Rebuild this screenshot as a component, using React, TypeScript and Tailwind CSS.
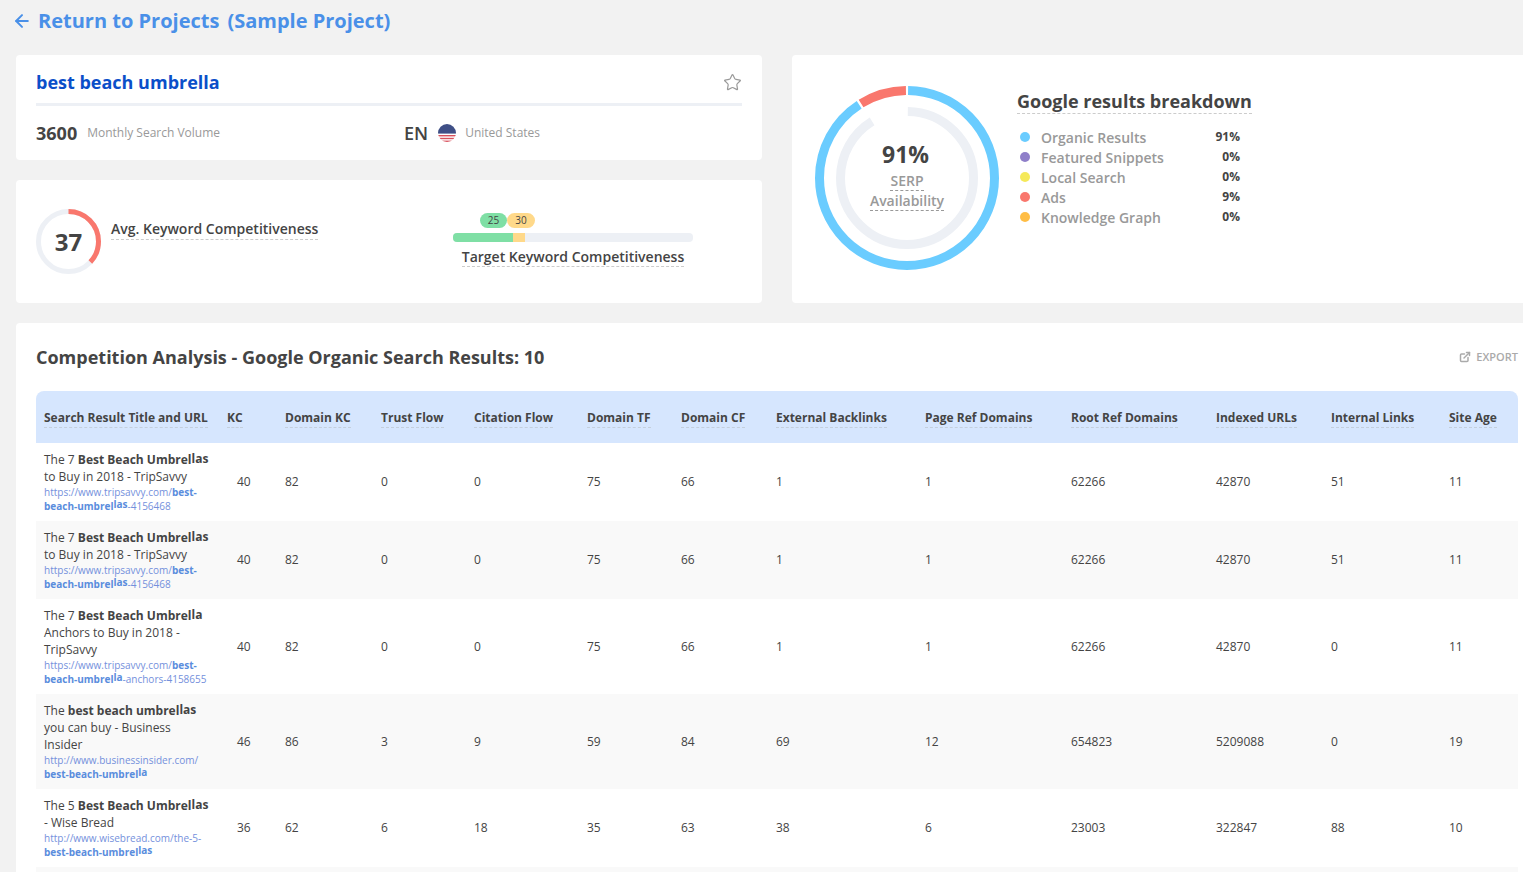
import type { ReactNode } from "react"

import { ArrowLeft, ExternalLink, Star } from "lucide-react"

const columns = [
	{ label: "Search Result Title and URL", width: "w-[183px]" },
	{ label: "KC", width: "w-[58px]" },
	{ label: "Domain KC", width: "w-[96px]" },
	{ label: "Trust Flow", width: "w-[93px]" },
	{ label: "Citation Flow", width: "w-[113px]" },
	{ label: "Domain TF", width: "w-[94px]" },
	{ label: "Domain CF", width: "w-[95px]" },
	{ label: "External Backlinks", width: "w-[149px]" },
	{ label: "Page Ref Domains", width: "w-[146px]" },
	{ label: "Root Ref Domains", width: "w-[145px]" },
	{ label: "Indexed URLs", width: "w-[115px]" },
	{ label: "Internal Links", width: "w-[118px]" },
	{ label: "Site Age", width: "w-[77px]" },
]

const legend = [
	{ label: "Organic Results", value: "91%", color: "bg-[#6accff]" },
	{ label: "Featured Snippets", value: "0%", color: "bg-[#8f7fc9]" },
	{ label: "Local Search", value: "0%", color: "bg-[#f5e95a]" },
	{ label: "Ads", value: "9%", color: "bg-[#f9776d]" },
	{ label: "Knowledge Graph", value: "0%", color: "bg-[#ffbd45]" },
]

function Strong({ children, tail }: { children: ReactNode; tail: string }) {
	return (
		<b className="font-bold text-[#444]">
			{children}
			<span className="align-[1px] leading-[0]">{tail}</span>
		</b>
	)
}

function UrlStrong({ children, tail }: { children: ReactNode; tail?: string }) {
	return (
		<b className="font-bold text-[#5a8ddd]">
			{children}
			{tail && <span className="align-[2px] leading-[0]">{tail}</span>}
		</b>
	)
}

const rows: { title: ReactNode; url: ReactNode; values: string[] }[] = [
	{
		title: (
			<>
				The 7 <Strong tail="las">Best Beach Umbrel</Strong> to Buy in 2018 - TripSavvy
			</>
		),
		url: (
			<>
				https://www.tripsavvy.com/<UrlStrong>best-</UrlStrong>
				<br />
				<UrlStrong tail="las">beach-umbrel</UrlStrong>-4156468
			</>
		),
		values: ["40", "82", "0", "0", "75", "66", "1", "1", "62266", "42870", "51", "11"],
	},
	{
		title: (
			<>
				The 7 <Strong tail="las">Best Beach Umbrel</Strong> to Buy in 2018 - TripSavvy
			</>
		),
		url: (
			<>
				https://www.tripsavvy.com/<UrlStrong>best-</UrlStrong>
				<br />
				<UrlStrong tail="las">beach-umbrel</UrlStrong>-4156468
			</>
		),
		values: ["40", "82", "0", "0", "75", "66", "1", "1", "62266", "42870", "51", "11"],
	},
	{
		title: (
			<>
				The 7 <Strong tail="la">Best Beach Umbrel</Strong> Anchors to Buy in 2018 - TripSavvy
			</>
		),
		url: (
			<>
				https://www.tripsavvy.com/<UrlStrong>best-</UrlStrong>
				<br />
				<UrlStrong tail="la">beach-umbrel</UrlStrong>-anchors-4158655
			</>
		),
		values: ["40", "82", "0", "0", "75", "66", "1", "1", "62266", "42870", "0", "11"],
	},
	{
		title: (
			<>
				The <Strong tail="las">best beach umbrel</Strong> you can buy - Business Insider
			</>
		),
		url: (
			<>
				http://www.businessinsider.com/
				<br />
				<UrlStrong tail="la">best-beach-umbrel</UrlStrong>
			</>
		),
		values: ["46", "86", "3", "9", "59", "84", "69", "12", "654823", "5209088", "0", "19"],
	},
	{
		title: (
			<>
				The 5 <Strong tail="las">Best Beach Umbrel</Strong> - Wise Bread
			</>
		),
		url: (
			<>
				http://www.wisebread.com/the-5-
				<br />
				<UrlStrong tail="las">best-beach-umbrel</UrlStrong>
			</>
		),
		values: ["36", "62", "6", "18", "35", "63", "38", "6", "23003", "322847", "88", "10"],
	},
]

function UsFlag() {
	return (
		<svg width="18" height="18" viewBox="0 0 18 18">
			<defs>
				<clipPath id="flag-clip">
					<circle cx="9" cy="9" r="9" />
				</clipPath>
			</defs>
			<g clipPath="url(#flag-clip)">
				<rect width="18" height="18" fill="#fff" />
				<rect y="11" width="18" height="1.4" fill="#d8505c" />
				<rect y="13.8" width="18" height="1.4" fill="#d8505c" />
				<rect y="16.6" width="18" height="1.4" fill="#d8505c" />
				<rect width="18" height="9.6" fill="#3f4f86" />
			</g>
		</svg>
	)
}

function ScoreRing() {
	return (
		<div className="relative h-[65px] w-[65px] shrink-0">
			<svg width="65" height="65" viewBox="0 0 65 65" className="-rotate-90">
				<circle cx="32.5" cy="32.5" r="30" fill="none" stroke="#edf0f5" strokeWidth="5" />
				<circle
					cx="32.5"
					cy="32.5"
					r="30"
					fill="none"
					stroke="#f9776d"
					strokeWidth="5"
					pathLength={100}
					strokeDasharray="37 63"
				/>
			</svg>
			<span className="absolute inset-0 flex items-center justify-center text-[24px] font-bold text-[#444]">
				37
			</span>
		</div>
	)
}

function SerpDonut() {
	return (
		<div className="relative h-[184px] w-[184px] shrink-0">
			<svg width="184" height="184" viewBox="0 0 184 184" className="-rotate-90">
				<circle
					cx="92"
					cy="92"
					r="66.5"
					fill="none"
					stroke="#edf0f5"
					strokeWidth="9"
					pathLength={100}
					strokeDasharray="91 9"
					strokeDashoffset="-0.2"
				/>
				<circle
					cx="92"
					cy="92"
					r="87.5"
					fill="none"
					stroke="#6accff"
					strokeWidth="9"
					pathLength={100}
					strokeDasharray="90.6 9.4"
					strokeDashoffset="-0.2"
				/>
				<circle
					cx="92"
					cy="92"
					r="87.5"
					fill="none"
					stroke="#f9776d"
					strokeWidth="9"
					pathLength={100}
					strokeDasharray="8.6 91.4"
					strokeDashoffset="-91.2"
				/>
			</svg>
			<div className="absolute inset-0 flex flex-col items-center justify-center pb-[8px]">
				<span className="mr-[3px] text-[23px] leading-[32px] font-bold text-[#444]">91%</span>
				<span className="mt-[1px] border-b border-dashed border-[#999] text-[14px] leading-[19px] font-semibold text-[#999]">
					SERP
				</span>
				<span className="border-b border-dashed border-[#999] text-[14px] leading-[19px] font-semibold text-[#999]">
					Availability
				</span>
			</div>
		</div>
	)
}

export default function App() {
	return (
		<div className="h-[872px] w-[1523px] overflow-hidden bg-[#f2f2f2] font-['Open_Sans',sans-serif] text-[#444]">
			<a className="flex h-[55px] items-start pt-[9px] pl-[12px] text-[20px] leading-[24px] font-bold text-[#4a90e8]">
				<ArrowLeft size={20} strokeWidth={2.4} className="mt-[2px] mr-[6px]" />
				<span>Return to Projects</span>
				<span className="ml-[8px]">(Sample Project)</span>
			</a>

			<div className="flex gap-[30px] pl-4">
				<div className="flex w-[746px] shrink-0 flex-col gap-5">
					<section className="h-[105px] rounded bg-white px-5">
						<div className="flex h-[51px] items-center justify-between border-b-[3px] border-[#edf0f5] pt-[7px]">
							<h1 className="text-[18px] font-bold text-[#0b4fc9]">best beach umbrella</h1>
							<Star size={19} strokeWidth={1.5} className="mb-[1px] text-[#999]" />
						</div>
						<div className="flex h-[51px] items-center pt-[3px]">
							<div className="flex w-[368px] items-center">
								<span className="text-[18px] font-bold">3600</span>
								<span className="ml-[10px] text-[12px] text-[#999]">Monthly Search Volume</span>
							</div>
							<span className="text-[18px] font-semibold">EN</span>
							<span className="ml-[10px]">
								<UsFlag />
							</span>
							<span className="ml-[9px] text-[12px] text-[#999]">United States</span>
						</div>
					</section>

					<section className="flex h-[123px] rounded bg-white pt-[29px] pl-5">
						<ScoreRing />
						<div className="ml-[10px] w-[342px] pt-[7px]">
							<span className="border-b border-dashed border-[#ccc] pb-[1px] text-[14px] leading-[19px] font-semibold">
								Avg. Keyword Competitiveness
							</span>
						</div>
						<div className="flex w-[240px] flex-col pt-[4px]">
							<div className="ml-[27px] flex text-[10px] leading-[15px]">
								<span className="w-[27px] rounded-full bg-[#7fdfa5] text-center">25</span>
								<span className="w-[28px] rounded-full bg-[#ffd98a] text-center">30</span>
							</div>
							<div className="mt-[5px] flex h-[9px] overflow-hidden rounded bg-[#edf0f5]">
								<div className="w-[60px] bg-[#7fdfa5]" />
								<div className="w-[12px] bg-[#ffd98a]" />
							</div>
							<span className="mt-[5px] self-center border-b border-dashed border-[#ccc] text-[14px] leading-[19px] font-semibold">
								Target Keyword Competitiveness
							</span>
						</div>
					</section>
				</div>

				<section className="flex h-[248px] w-[800px] shrink-0 rounded bg-white pt-[31px] pl-[23px]">
					<SerpDonut />
					<div className="ml-[18px] w-[224px]">
						<h2 className="w-fit whitespace-nowrap border-b border-dashed border-[#ccc] pt-[4px] text-[18px] leading-[23px] font-bold">
							Google results breakdown
						</h2>
						<ul className="mt-[13px]">
							{legend.map(item => (
								<li key={item.label} className="flex h-5 items-center">
									<span className={`ml-[3px] h-[10px] w-[10px] rounded-full ${item.color}`} />
									<span className="ml-[11px] text-[14px] font-semibold text-[#999]">{item.label}</span>
									<span className="mr-[1px] ml-auto text-[12px] font-bold">{item.value}</span>
								</li>
							))}
						</ul>
					</div>
				</section>
			</div>

			<section className="mt-5 ml-4 w-[1530px] rounded bg-white px-5">
				<div className="flex h-[68px] w-[1482px] items-center justify-between">
					<h2 className="text-[18px] font-bold">Competition Analysis - Google Organic Search Results: 10</h2>
					<span className="flex items-center gap-[5px] text-[11px] font-semibold text-[#aaa]">
						<ExternalLink size={12} strokeWidth={3} />
						EXPORT
					</span>
				</div>
				<table className="w-[1482px] table-fixed border-collapse">
					<colgroup>
						{columns.map(column => (
							<col key={column.label} className={column.width} />
						))}
					</colgroup>
					<thead>
						<tr className="h-[52px] bg-[#d6e6fe]">
							{columns.map((column, index) => (
								<th
									key={column.label}
									className={`whitespace-nowrap pt-[2px] pl-2 text-left text-[12px] font-bold ${index === 0 ? "rounded-tl-lg" : ""} ${index === columns.length - 1 ? "rounded-tr-lg" : ""}`}
								>
									<span className="border-b border-dashed border-[#c4cfdc] pb-[1px]">{column.label}</span>
								</th>
							))}
						</tr>
					</thead>
					<tbody>
						{rows.map((row, rowIndex) => (
							<tr key={rowIndex} className={rowIndex % 2 === 1 ? "bg-[#f9f9f9]" : "bg-white"}>
								<td className="px-2 py-2 align-top">
									<div className="text-[12px] leading-[17px]">{row.title}</div>
									<div className="text-[10px] leading-[14px] text-[#7490dc]">{row.url}</div>
								</td>
								{row.values.map((value, index) => (
									<td
										key={index}
										className={`align-middle text-[12px] ${index === 0 ? "pl-[18px]" : "pl-2"}`}
									>
										{value}
									</td>
								))}
							</tr>
						))}
						<tr className="h-[78px] bg-[#f9f9f9]">
							<td colSpan={13} />
						</tr>
					</tbody>
				</table>
			</section>
		</div>
	)
}
